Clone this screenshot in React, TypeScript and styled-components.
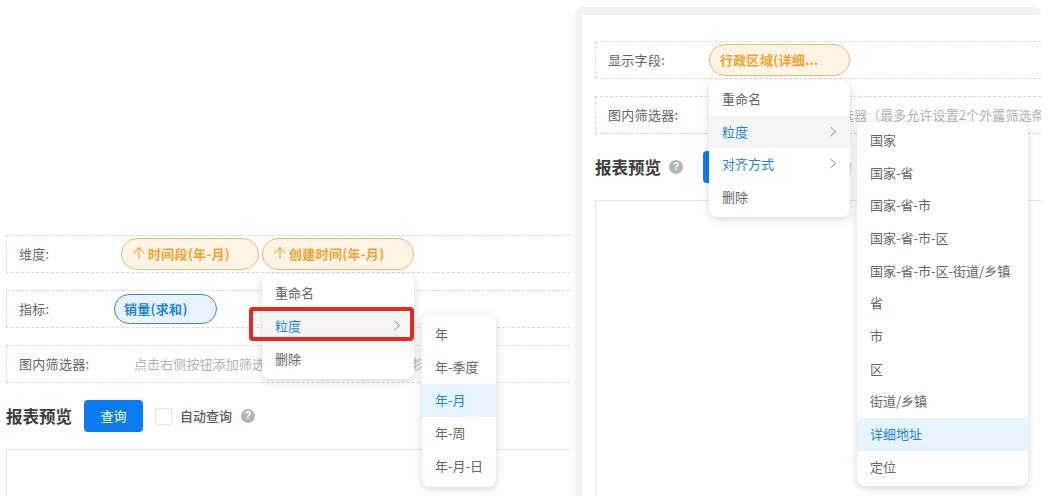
import React from "react";
import styled, { createGlobalStyle } from "styled-components";

const Global = createGlobalStyle`
  html, body { margin: 0; padding: 0; background: #fff; }
  body { font-family: "Noto Sans CJK SC", "Liberation Sans", sans-serif; font-size: 13px; color: #666; }
`;

const Page = styled.div`
  width: 1059px;
  height: 496px;
  display: flex;
  align-items: flex-start;
  overflow: hidden;
  background: #fff;
`;

const LeftColumn = styled.section`
  position: relative;
  box-sizing: border-box;
  width: 564px;
  height: 496px;
  margin: 0 5px 0 6px;
  padding-top: 235px;
  flex: none;
`;

const RightFrame = styled.section`
  box-sizing: border-box;
  width: 466px;
  height: 489px;
  margin-top: 7px;
  padding: 8px 0 0 7px;
  flex: none;
  background: #f3f4f5;
  border-radius: 6px 6px 0 0;
`;

const RightPanel = styled.div`
  position: relative;
  box-sizing: border-box;
  height: 100%;
  padding: 26px 0 0 13px;
  background: #fff;
`;

const Row = styled.div`
  box-sizing: border-box;
  height: 38px;
  margin-bottom: 17px;
  padding: 0 0 1px 12px;
  display: flex;
  align-items: center;
  gap: 4px;
  overflow: hidden;
  white-space: nowrap;
  border: 1px dashed #d9d9d9;
  border-width: 1px 0 1px 1px;
`;

const Label = styled.span<{ $width: number }>`
  flex: none;
  width: ${(p) => p.$width}px;
  color: #666;
  font-size: 13px;
  letter-spacing: 0.3px;
`;

const Chip = styled.span<{ $tone: "orange" | "blue"; $right: number }>`
  box-sizing: border-box;
  flex: none;
  height: ${(p) => (p.$tone === "blue" ? 30 : 32)}px;
  padding: 0 ${(p) => p.$right}px 1px ${(p) => (p.$tone === "blue" ? 9 : 10)}px;
  display: inline-flex;
  align-items: center;
  gap: 2px;
  font-size: 13px;
  font-weight: 700;
  letter-spacing: 0.3px;
  border-radius: 16px;
  border: 1px solid ${(p) => (p.$tone === "blue" ? "#4687bf" : "#f0bb6e")};
  background: ${(p) => (p.$tone === "blue" ? "#e8f4fd" : "#fff4e5")};
  color: ${(p) => (p.$tone === "blue" ? "#1f86d8" : "#f5a32e")};
  & + & {
    margin-left: -1px;
  }
`;

const Placeholder = styled.span<{ $indent: number }>`
  margin-left: ${(p) => p.$indent}px;
  color: #b4b4b4;
  font-size: 13px;
  letter-spacing: 0.1px;
`;

const Header = styled.div`
  height: 32px;
  margin-bottom: 17px;
  display: flex;
  align-items: center;
  white-space: nowrap;
`;

const Title = styled.h2`
  margin: 0 0 1px;
  font-size: 16.5px;
  font-weight: 700;
  color: #3c3c3c;
`;

const QueryButton = styled.button<{ $gap: number }>`
  width: 59px;
  height: 32px;
  margin-left: ${(p) => p.$gap}px;
  padding: 0 0 2px;
  flex: none;
  border: 0;
  border-radius: 4px;
  background: #0a7cf0;
  color: #fff;
  font: 400 13px "Noto Sans CJK SC", sans-serif;
`;

const CheckBox = styled.span`
  box-sizing: border-box;
  flex: none;
  width: 17px;
  height: 17px;
  margin-left: 12px;
  border: 1px solid #e4e4e4;
  border-radius: 2px;
`;

const CheckLabel = styled.span`
  margin: 0 0 1px 8px;
  color: #5a5a5a;
  font-size: 13px;
  font-weight: 500;
`;

const Help = styled.span<{ $gap: number }>`
  flex: none;
  width: 14px;
  height: 14px;
  margin-left: ${(p) => p.$gap}px;
  border-radius: 50%;
  background: #b4b7ba;
  color: #fff;
  font: 700 10px/14px "Liberation Sans", sans-serif;
  text-align: center;
`;

const Preview = styled.div<{ $height: number }>`
  box-sizing: border-box;
  height: ${(p) => p.$height}px;
  border: 1px solid #e6e6e6;
  border-right: 0;
`;

const Menu = styled.ul<{ $left: number; $top: number; $width: number; $pad?: number }>`
  position: absolute;
  z-index: 2;
  left: ${(p) => p.$left}px;
  top: ${(p) => p.$top}px;
  box-sizing: border-box;
  width: ${(p) => p.$width}px;
  margin: 0;
  padding: ${(p) => p.$pad ?? 3}px 0;
  list-style: none;
  background: #fff;
  border-radius: 8px;
  box-shadow: 0 2px 8px rgba(0, 0, 0, 0.16);
`;

const Item = styled.li<{ $active?: "blue" | "gray"; $blue?: boolean; $height?: number }>`
  box-sizing: border-box;
  height: ${(p) => p.$height ?? 33}px;
  padding: 0 13px 2px;
  display: flex;
  align-items: center;
  justify-content: space-between;
  font-size: 13px;
  white-space: nowrap;
  color: ${(p) => (p.$active === "blue" || p.$blue ? "#1f86d8" : "#666")};
  background: ${(p) => (p.$active === "blue" ? "#e6f4fe" : p.$active === "gray" ? "#f5f5f5" : "transparent")};
`;

const Highlight = styled.div`
  position: absolute;
  z-index: 3;
  left: 243px;
  top: 307px;
  box-sizing: border-box;
  width: 165px;
  height: 34px;
  border: 4px solid #e8281e;
  border-radius: 4px;
`;

const Arrow = () => (
  <svg width="14" height="14" viewBox="0 0 14 14" fill="none" stroke="currentColor" strokeWidth="1.1">
    <path d="M7 1.5V13M1.5 7.5L7 1.5L12.5 7.5" />
  </svg>
);

const Chevron = () => (
  <svg width="8" height="11" viewBox="0 0 8 11" fill="none" stroke="#8c8c8c" strokeWidth="1">
    <path d="M1.5 1L6.5 5.5L1.5 10" />
  </svg>
);

const regionLevels = ["国家", "国家-省", "国家-省-市", "国家-省-市-区", "国家-省-市-区-街道/乡镇", "省", "市", "区", "街道/乡镇"];
const timeLevels = ["年", "年-季度", "年-月", "年-周", "年-月-日"];

export default function App() {
  return (
    <Page>
      <Global />
      <LeftColumn>
        <Row>
          <Label $width={98}>维度:</Label>
          <Chip $tone="orange" $right={28}><Arrow />时间段(年-月)</Chip>
          <Chip $tone="orange" $right={29}><Arrow />创建时间(年-月)</Chip>
        </Row>
        <Row>
          <Label $width={91}>指标:</Label>
          <Chip $tone="blue" $right={28}>销量(求和)</Chip>
        </Row>
        <Row>
          <Label $width={73}>图内筛选器:</Label>
          <Placeholder $indent={38}>点击右侧按钮添加筛选器，设置后的筛选条件将影响图表数据</Placeholder>
        </Row>
        <Header>
          <Title>报表预览</Title>
          <QueryButton $gap={12}>查询</QueryButton>
          <CheckBox />
          <CheckLabel>自动查询</CheckLabel>
          <Help $gap={9}>?</Help>
        </Header>
        <Preview $height={60} />
        <Menu $left={256} $top={274} $width={152}>
          <Item>重命名</Item>
          <Item $active="gray" $blue>粒度<Chevron /></Item>
          <Item>删除</Item>
        </Menu>
        <Highlight />
        <Menu $left={416} $top={314} $width={74} $pad={4}>
          {timeLevels.map((t) => (
            <Item key={t} $active={t === "年-月" ? "blue" : undefined}>{t}</Item>
          ))}
        </Menu>
      </LeftColumn>
      <RightFrame>
        <RightPanel>
          <Row>
            <Label $width={97}>显示字段:</Label>
            <Chip $tone="orange" $right={30}>行政区域(详细...</Chip>
          </Row>
          <Row>
            <Label $width={73}>图内筛选器:</Label>
            <Placeholder $indent={38}>点击右侧按钮添加筛选器（最多允许设置2个外露筛选条件）</Placeholder>
          </Row>
          <Header>
            <Title>报表预览</Title>
            <Help $gap={8}>?</Help>
            <QueryButton $gap={20}>查询</QueryButton>
            <CheckBox />
            <CheckLabel>自动查询</CheckLabel>
            <Help $gap={9}>?</Help>
          </Header>
          <Preview $height={300} />
          <Menu $left={127} $top={65} $width={141}>
            <Item $height={32.7}>重命名</Item>
            <Item $height={32.7} $active="gray" $blue>粒度<Chevron /></Item>
            <Item $height={32.7} $blue>对齐方式<Chevron /></Item>
            <Item $height={32.7}>删除</Item>
          </Menu>
          <Menu $left={275} $top={107} $width={171} $pad={2}>
            {regionLevels.map((t) => (
              <Item key={t} $height={32.7}>{t}</Item>
            ))}
            <Item $active="blue" $height={32.7}>详细地址</Item>
            <Item $height={32.7}>定位</Item>
          </Menu>
        </RightPanel>
      </RightFrame>
    </Page>
  );
}
